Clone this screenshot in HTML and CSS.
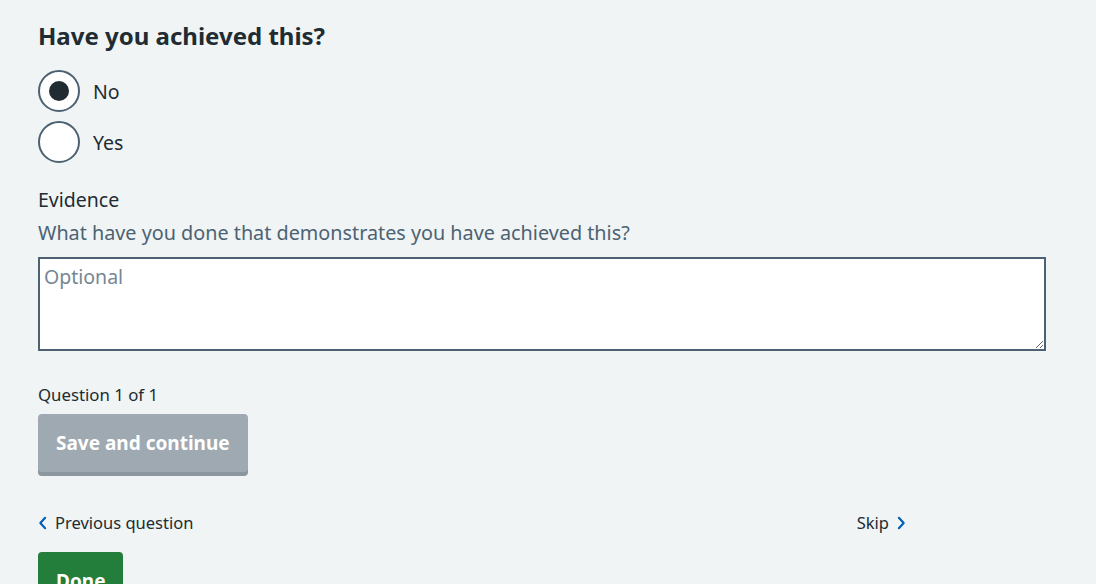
FILE: index.html
```html
<!DOCTYPE html>
<html lang="en">
<head>
<meta charset="utf-8">
<title>Have you achieved this?</title>
<link rel="stylesheet" href="styles.css">
</head>
<body>
<main class="page">
  <form class="question-form">
    <fieldset class="fieldset">
      <legend class="legend">Have you achieved this?</legend>
      <div class="radios">
        <label class="radio">
          <input class="radio-input" type="radio" name="achieved" value="no" checked>
          <span class="radio-mark"></span>
          <span class="radio-label">No</span>
        </label>
        <label class="radio">
          <input class="radio-input" type="radio" name="achieved" value="yes">
          <span class="radio-mark"></span>
          <span class="radio-label">Yes</span>
        </label>
      </div>
    </fieldset>

    <div class="form-group">
      <label class="label" for="evidence">Evidence</label>
      <div class="hint">What have you done that demonstrates you have achieved this?</div>
      <textarea class="textarea" id="evidence" placeholder="Optional"></textarea>
    </div>

    <p class="progress">Question 1 of 1</p>
    <button class="button button-disabled" type="button">Save and continue</button>

    <nav class="pagination">
      <a class="page-link" href="#">
        <svg class="chevron" viewBox="0 0 10 16" width="9" height="14" aria-hidden="true"><path d="M8 2 L2.5 8 L8 14" fill="none" stroke="currentColor" stroke-width="2.4" stroke-linecap="round" stroke-linejoin="round"/></svg>
        <span class="page-link-text">Previous question</span>
      </a>
      <a class="page-link" href="#">
        <span class="page-link-text">Skip</span>
        <svg class="chevron" viewBox="0 0 10 16" width="9" height="14" aria-hidden="true"><path d="M2 2 L7.5 8 L2 14" fill="none" stroke="currentColor" stroke-width="2.4" stroke-linecap="round" stroke-linejoin="round"/></svg>
      </a>
    </nav>

    <button class="button button-done" type="button">Done</button>
  </form>
</main>
</body>
</html>
```

FILE: styles.css
```css
* { box-sizing: border-box; }

html, body {
  margin: 0;
  padding: 0;
  background: #f0f4f5;
  color: #212b32;
  font-family: "Noto Sans", "Open Sans", Arial, sans-serif;
}

.page {
  padding: 20px 38px 0 38px;
}

.question-form {
  display: flex;
  flex-direction: column;
  align-items: flex-start;
}

.fieldset {
  border: 0;
  margin: 0;
  padding: 0;
}

.legend {
  padding: 0;
  font-size: 24px;
  font-weight: 700;
  line-height: 32px;
  margin-bottom: 18px;
}

.radios {
  display: flex;
  flex-direction: column;
  gap: 9px;
}

.radio {
  display: flex;
  align-items: center;
  gap: 13px;
  cursor: pointer;
}

.radio-input {
  position: absolute;
  opacity: 0;
  width: 0;
  height: 0;
  margin: 0;
}

.radio-mark {
  width: 42px;
  height: 42px;
  border: 2px solid #4c6272;
  border-radius: 50%;
  background: #fff;
  display: flex;
  align-items: center;
  justify-content: center;
}

.radio-input:checked + .radio-mark::after {
  content: "";
  width: 20px;
  height: 20px;
  border-radius: 50%;
  background: #212b32;
}

.radio-label {
  font-size: 19.5px;
  line-height: 28px;
  padding-top: 2px;
}

.form-group {
  margin-top: 23px;
  width: 1008px;
}

.label {
  display: block;
  font-size: 19.5px;
  line-height: 28px;
}

.hint {
  color: #4c6272;
  font-size: 19.8px;
  line-height: 28px;
  margin-top: 5px;
  margin-bottom: 10px;
}

.textarea {
  display: block;
  width: 1008px;
  height: 94px;
  border: 2px solid #4c6272;
  border-radius: 0;
  background: #fff;
  padding: 4px 4px 2px;
  font-family: inherit;
  font-size: 19.5px;
  line-height: 28px;
  color: #212b32;
  resize: vertical;
}

.textarea::placeholder {
  color: #768692;
}

.progress {
  margin: 32px 0 7px;
  font-size: 16.8px;
  line-height: 24px;
}

.button {
  font-family: inherit;
  font-weight: 700;
  font-size: 19px;
  line-height: 25px;
  color: #fff;
  border: 0;
  border-radius: 4px;
  padding: 17px 18px 16px;
  cursor: pointer;
}

.button-disabled {
  background: #9ea9b1;
  box-shadow: 0 4px 0 #8c969e;
  cursor: default;
}

.button-done {
  background: #247e3b;
  box-shadow: 0 4px 0 #00401e;
}

.pagination {
  display: flex;
  justify-content: space-between;
  align-items: center;
  width: 868px;
  margin-top: 39px;
  margin-bottom: 17px;
}

.page-link {
  display: flex;
  align-items: center;
  gap: 8px;
  color: #212b32;
  text-decoration: none;
  font-size: 16.5px;
  line-height: 24px;
}

.chevron {
  color: #005eb8;
  flex: none;
}
```
